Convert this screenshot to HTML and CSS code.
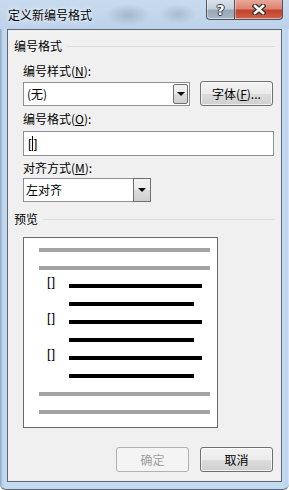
FILE: index.html
```html
<!DOCTYPE html>
<html lang="zh-CN">
<head>
    <meta charset="UTF-8">
    <title>定义新编号格式</title>
    <link rel="stylesheet" href="styles.css">
</head>
<body>
    <div class="window">
        <div class="titlebar">
            <span class="title">定义新编号格式</span>
            <div class="caption-buttons">
                <span class="cap-btn help">?</span>
                <span class="cap-btn close">
                    <svg width="14" height="11" viewBox="0 0 14 11">
                        <path d="M3 2 L11 9 M11 2 L3 9" stroke="#3a3030" stroke-width="5" stroke-linecap="square"/>
                        <path d="M3 2 L11 9 M11 2 L3 9" stroke="#ffffff" stroke-width="2.6" stroke-linecap="square"/>
                    </svg>
                </span>
            </div>
        </div>

        <div class="client">
            <div class="group-head"><span>编号格式</span><i class="rule"></i></div>

            <div class="fields">
                <div class="label first">编号样式(<u>N</u>):</div>
                <div class="row">
                    <div class="combo wide">
                        <span class="value">(无)</span>
                        <span class="drop"><i class="arrow"></i></span>
                    </div>
                    <button class="btn font-btn">字体(<u>F</u>)...</button>
                </div>

                <div class="label">编号格式(<u>O</u>):</div>
                <div class="textbox"><span class="num-text">[<i class="caret"></i>]</span></div>

                <div class="label">对齐方式(<u>M</u>):</div>
                <div class="combo narrow">
                    <span class="value">左对齐</span>
                    <span class="drop full"><i class="arrow"></i></span>
                </div>
            </div>

            <div class="group-head second"><span>预览</span><i class="rule"></i></div>

            <div class="preview">
                <div class="pv-row"><i class="bar gray"></i></div>
                <div class="pv-row"><i class="bar gray"></i></div>
                <div class="pv-row"><span class="num">[]</span><i class="bar black long"></i></div>
                <div class="pv-row"><span class="num"></span><i class="bar black short"></i></div>
                <div class="pv-row"><span class="num">[]</span><i class="bar black long"></i></div>
                <div class="pv-row"><span class="num"></span><i class="bar black short"></i></div>
                <div class="pv-row"><span class="num">[]</span><i class="bar black long"></i></div>
                <div class="pv-row"><span class="num"></span><i class="bar black short"></i></div>
                <div class="pv-row"><i class="bar gray"></i></div>
                <div class="pv-row"><i class="bar gray"></i></div>
            </div>

            <div class="actions">
                <button class="btn" disabled>确定</button>
                <button class="btn">取消</button>
            </div>
        </div>
    </div>
</body>
</html>
```

FILE: styles.css
```css
body {
    margin: 0;
    padding: 0;
    background-color: #ffffff;
    font-family: "Noto Sans CJK SC", "Liberation Sans", sans-serif;
    font-size: 12px;
}

.window {
    width: 289px;
    height: 490px;
    box-sizing: border-box;
    background:
        linear-gradient(90deg, #8aa1bc 0px, #b7cfe9 2px, #c4daf1 5px, #c4daf1 284px, #b9d1ec 287px, #dbe9f8 289px);
    border-bottom: 1px solid #5b6470;
    border-radius: 0 0 6px 6px;
    display: flex;
    flex-direction: column;
}

/* title bar, with the blurred glass look */
.titlebar {
    height: 29px;
    display: flex;
    justify-content: space-between;
    align-items: flex-start;
    padding: 0 6px 0 8px;
    background:
        radial-gradient(ellipse 22px 11px at 128px 15px, rgba(110, 122, 138, 0.35), rgba(110, 122, 138, 0)),
        radial-gradient(ellipse 18px 10px at 178px 14px, rgba(110, 122, 138, 0.3), rgba(110, 122, 138, 0)),
        linear-gradient(180deg, #c9dbee 0%, #bcd2ea 100%);
}

.title {
    line-height: 29px;
    color: #000000;
    text-shadow: 0 0 6px #ffffff, 0 0 3px #eef5fc;
}

.caption-buttons {
    display: flex;
}

.cap-btn {
    height: 20px;
    box-sizing: border-box;
    border: 1px solid #4c5663;
    border-top: none;
    display: flex;
    align-items: center;
    justify-content: center;
    box-shadow: inset 0 -1px 0 rgba(255, 255, 255, 0.5), inset 1px 0 0 rgba(255, 255, 255, 0.4);
}

.help {
    width: 28px;
    border-right: none;
    border-radius: 0 0 0 4px;
    background: linear-gradient(180deg, #d9e2ec 0%, #c5d0dc 45%, #98a6b5 55%, #aab6c3 100%);
    color: #ffffff;
    font-family: "DejaVu Sans", sans-serif;
    font-weight: bold;
    font-size: 14px;
    text-shadow: -1px 0 #2e3640, 1px 0 #2e3640, 0 -1px #2e3640, 0 1px #2e3640;
}

.close {
    width: 49px;
    border-radius: 0 0 4px 0;
    background: linear-gradient(180deg, #e8a898 0%, #dc8470 45%, #c3412b 55%, #d2624a 100%);
}

/* client area */
.client {
    margin: 0 7px;
    height: 453px;
    box-sizing: border-box;
    border: 1px solid #5f6670;
    background-color: #f0f0f0;
    padding: 8px 6px 0 6px;
    color: #000000;
}

.group-head {
    display: flex;
    align-items: center;
    height: 16px;
    line-height: 16px;
}

.group-head.second {
    margin-top: 9px;
}

.group-head .rule {
    flex: 1;
    height: 1px;
    margin-left: 5px;
    background-color: #d5dfe5;
}

.fields {
    padding-left: 9px;
    display: flex;
    flex-direction: column;
    align-items: flex-start;
}

.label {
    height: 16px;
    line-height: 16px;
    margin-top: 4px;
}

.label.first {
    margin-top: 9px;
}

.fields .label:nth-of-type(3) {
    margin-top: 5px;
}

.row {
    margin-top: 2px;
    display: flex;
    align-items: center;
    gap: 10px;
}

.combo {
    height: 24px;
    box-sizing: border-box;
    border: 1px solid #8e9297;
    background-color: #ffffff;
    display: flex;
    align-items: center;
    justify-content: space-between;
    padding: 1px;
}

.combo.wide {
    width: 167px;
}

.combo.narrow {
    width: 128px;
    margin-top: 2px;
    padding: 0;
}

.combo .value {
    padding-left: 2px;
    line-height: 20px;
}

.drop {
    width: 15px;
    height: 20px;
    box-sizing: border-box;
    border: 1px solid #707070;
    border-radius: 2px;
    background: linear-gradient(180deg, #f2f2f2 0%, #ebebeb 50%, #dddddd 51%, #cfcfcf 100%);
    display: flex;
    align-items: center;
    justify-content: center;
}

.drop.full {
    width: 18px;
    height: 24px;
    margin: -1px -1px -1px 0;
    border-radius: 0;
}

.arrow {
    width: 0;
    height: 0;
    border-left: 4px solid transparent;
    border-right: 4px solid transparent;
    border-top: 4px solid #000000;
}

.btn {
    font-family: "Noto Sans CJK SC", "Liberation Sans", sans-serif;
    font-size: 12px;
    color: #000000;
    width: 73px;
    height: 25px;
    padding: 0;
    box-sizing: border-box;
    border: 1px solid #707070;
    border-radius: 3px;
    background: linear-gradient(180deg, #f2f2f2 0%, #ebebeb 50%, #dddddd 51%, #cfcfcf 100%);
    box-shadow: inset 0 0 0 1px rgba(255, 255, 255, 0.7);
}

.btn:disabled {
    color: #a0a0a0;
    border-color: #adb2b5;
    background: #f4f4f4;
    box-shadow: none;
}

.textbox {
    margin-top: 4px;
    width: 251px;
    height: 25px;
    box-sizing: border-box;
    border: 1px solid #8e9297;
    background-color: #ffffff;
    display: flex;
    align-items: center;
    padding-left: 4px;
}

.num-text {
    font-family: "Liberation Sans", sans-serif;
    font-size: 13px;
    letter-spacing: -1px;
    display: flex;
    align-items: center;
}

.caret {
    width: 1px;
    height: 15px;
    background-color: #000000;
    margin: 0 1px;
}

/* preview */
.preview {
    margin: 10px 0 0 9px;
    width: 195px;
    height: 191px;
    box-sizing: border-box;
    border: 1px solid #6a6a6a;
    background-color: #ffffff;
    padding: 10px 0 0 15px;
    display: flex;
    flex-direction: column;
    gap: 14px;
}

.pv-row {
    height: 4px;
    display: flex;
    align-items: flex-end;
}

.bar {
    display: block;
    height: 4px;
}

.bar.gray {
    width: 171px;
    background-color: #a3a3a3;
}

.bar.black {
    background-color: #000000;
}

.bar.long {
    width: 133px;
}

.bar.short {
    width: 125px;
}

.num {
    width: 22px;
    margin-left: 8px;
    height: 13px;
    line-height: 13px;
    font-family: "Liberation Sans", sans-serif;
    font-size: 13px;
    letter-spacing: 1px;
}

.actions {
    margin-top: 19px;
    display: flex;
    justify-content: flex-end;
    gap: 11px;
    padding-right: 2px;
}
```
